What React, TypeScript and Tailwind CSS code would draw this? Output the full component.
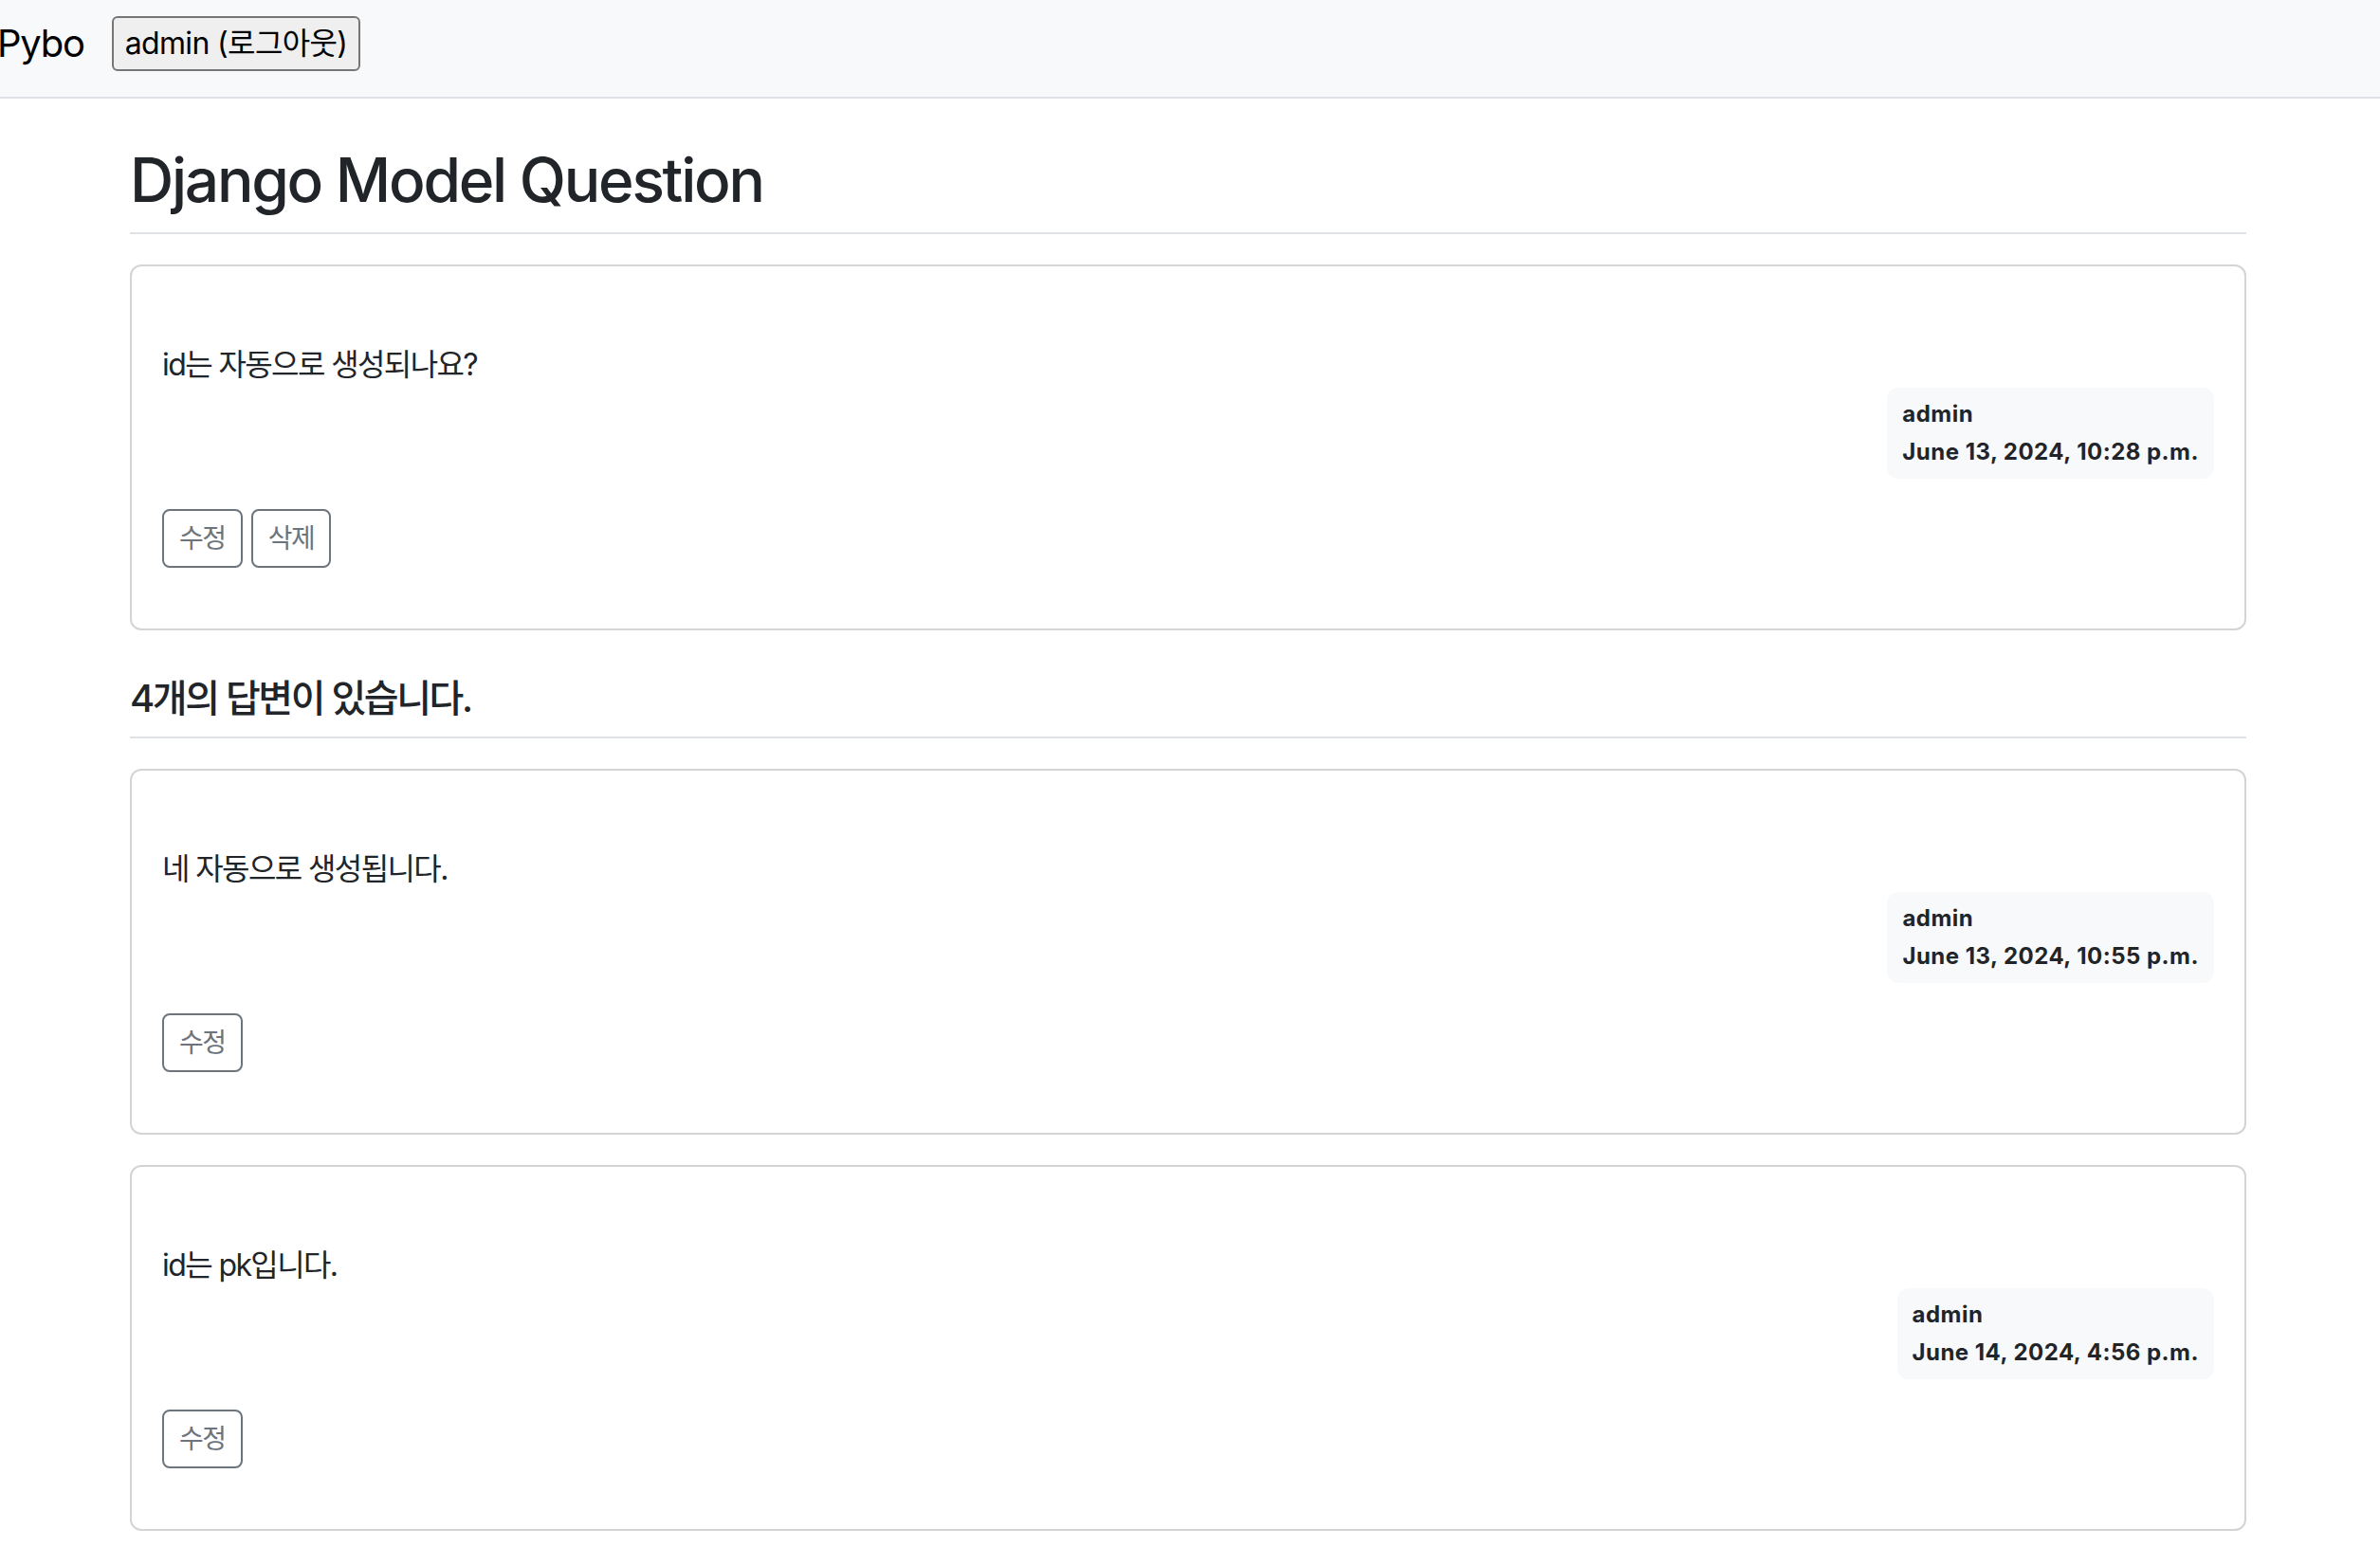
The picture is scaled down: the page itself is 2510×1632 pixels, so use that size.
import React from "react";

const FONT = "font-['Inter','Noto_Sans_CJK_KR',sans-serif]";

type Post = {
  content: string;
  author: string;
  date: string;
  canDelete?: boolean;
};

function Card({ post }: { post: Post }) {
  return (
    <div className="mt-[32px] border-2 border-[#d4d4d4] rounded-[12px] p-[32px] bg-white">
      <div className="text-[32px] leading-[48px] tracking-[-0.05em] whitespace-pre-line text-[#212529]">
        {"\n" + post.content}
      </div>
      <div className="flex justify-end">
        <div className="bg-[#f8f9fa] rounded-[12px] p-[16px] text-[24px] font-bold leading-[24px] tracking-[0.02em] text-[#212529]">
          <div className="mb-[16px]">{post.author}</div>
          <div>{post.date}</div>
        </div>
      </div>
      <div className="my-[32px] flex gap-[9px]">
        <button className="border-2 border-[#6c757d] text-[#6c757d] rounded-[8px] px-[16px] py-[8px] text-[28px] leading-[42px] tracking-[-0.05em] bg-white">
          수정
        </button>
        {post.canDelete && (
          <button className="border-2 border-[#6c757d] text-[#6c757d] rounded-[8px] px-[16px] py-[8px] text-[28px] leading-[42px] tracking-[-0.05em] bg-white">
            삭제
          </button>
        )}
      </div>
    </div>
  );
}

export default function App() {
  const question: Post = {
    content: "id는 자동으로 생성되나요?",
    author: "admin",
    date: "June 13, 2024, 10:28 p.m.",
    canDelete: true,
  };
  const answers: Post[] = [
    { content: "네 자동으로 생성됩니다.", author: "admin", date: "June 13, 2024, 10:55 p.m." },
    { content: "id는 pk입니다.", author: "admin", date: "June 14, 2024, 4:56 p.m." },
  ];
  return (
    <div className={`min-h-screen bg-white text-[#212529] ${FONT}`}>
      <nav className="h-[104px] bg-[#f8f9fa] border-b-2 border-[#dee2e6] flex items-center pb-[10px]">
        <span className="w-[121px] ml-[-3px] text-[40px] leading-[60px] tracking-[-0.03em] text-black">Pybo</span>
        <button className="w-[262px] h-[58px] text-[32px] leading-[48px] tracking-[-0.02em] text-black bg-[#efefef] border-2 border-[#767676] rounded-[6px]">
          admin (로그아웃)
        </button>
      </nav>
      <div className="w-[2232px] ml-[137px] pt-[32px] pb-[32px]">
        <h2 className="text-[64px] font-medium leading-[1.2] tracking-[-0.035em] py-[16px] border-b-2 border-[#dee2e6]">
          Django Model Question
        </h2>
        <Card post={question} />
        <h5 className="mt-[32px] text-[40px] font-medium leading-[48px] tracking-[-0.06em] py-[16px] border-b-2 border-[#dee2e6]">
          4개의 답변이 있습니다.
        </h5>
        {answers.map((a, i) => (
          <Card key={i} post={a} />
        ))}
      </div>
    </div>
  );
}
